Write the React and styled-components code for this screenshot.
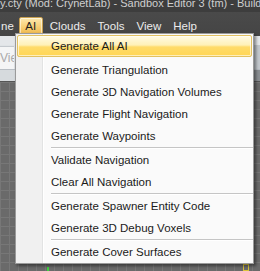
import React from "react";
import styled, { createGlobalStyle } from "styled-components";

const GlobalStyle = createGlobalStyle`
  html, body {
    margin: 0;
    padding: 0;
    background: #6b6b6b;
  }
  body {
    font-family: "Liberation Sans", Arial, sans-serif;
  }
`;

const menuItems = [
  { label: "Generate All AI", active: true },
  { label: "Generate Triangulation" },
  { label: "Generate 3D Navigation Volumes" },
  { label: "Generate Flight Navigation" },
  { label: "Generate Waypoints", separator: true },
  { label: "Validate Navigation" },
  { label: "Clear All Navigation", separator: true },
  { label: "Generate Spawner Entity Code" },
  { label: "Generate 3D Debug Voxels", separator: true },
  { label: "Generate Cover Surfaces" },
];

const topMenu = ["Clouds", "Tools", "View", "Help"];

function App() {
  return (
    <>
      <GlobalStyle />
      <Window>
        <TitleBar>
          <TitleText>y.cty (Mod: CrynetLab) - Sandbox Editor 3 (tm) - Build 5767</TitleText>
        </TitleBar>

        <MenuBar>
          <TopItem $cut>ne</TopItem>
          <TopItem $open>AI</TopItem>
          {topMenu.map((m) => (
            <TopItem key={m}>{m}</TopItem>
          ))}
        </MenuBar>

        <Workspace>
          <ToolStrip>
            <ViewTab>Vie</ViewTab>
          </ToolStrip>
          <SubStrip />
          <Grid>
            <Marker $color="#3fd13f" $left={47} />
            <Marker $color="#d9c23a" $left={243} $box />
          </Grid>
        </Workspace>

        <Dropdown>
          {menuItems.map((item) => (
            <React.Fragment key={item.label}>
              <Item $active={item.active}>{item.label}</Item>
              {item.separator && <Separator />}
            </React.Fragment>
          ))}
        </Dropdown>
      </Window>
    </>
  );
}

export default App;

const Window = styled.div`
  position: relative;
  width: 260px;
  height: 271px;
  overflow: hidden;
  display: flex;
  flex-direction: column;
  background: #6b6b6b;
`;

const TitleBar = styled.div`
  height: 12px;
  flex-shrink: 0;
  overflow: hidden;
  background: #3d3d3d;
  color: #cfcfcf;
  font-size: 11px;
  white-space: nowrap;
`;

const TitleText = styled.span`
  display: block;
  margin-top: -4px;
  line-height: 14px;
`;

const MenuBar = styled.div`
  height: 24px;
  flex-shrink: 0;
  display: flex;
  align-items: center;
  background: linear-gradient(#4a4a4a, #454545);
`;

const TopItem = styled.div`
  height: 18px;
  margin-top: 3px;
  box-sizing: border-box;
  display: flex;
  align-items: center;
  padding: 0 5px;
  font-size: 11.5px;
  color: #ececec;
  border: 1px solid transparent;
  border-radius: 2px;

  ${(p) =>
    p.$cut &&
    `
    padding: 0 4px 0 0;
  `}

  ${(p) =>
    p.$open &&
    `
    width: 24px;
    padding: 0;
    margin-right: 1px;
    justify-content: center;
    color: #1e1e1e;
    border-color: #c8a050;
    background: linear-gradient(#fde9b0, #f8d27a 50%, #f0b94e);
    box-shadow: inset 0 0 0 1px rgba(255, 255, 255, 0.55);
  `}
`;

const Workspace = styled.div`
  flex: 1;
  display: flex;
  flex-direction: column;
`;

const ToolStrip = styled.div`
  height: 34px;
  flex-shrink: 0;
  box-sizing: border-box;
  border-top: 9px solid #e4e7ea;
  border-bottom: 1px solid #b8bec4;
  display: flex;
  background: linear-gradient(90deg, #dfe3e6 0 246px, #c3c8cd 246px);
`;

const ViewTab = styled.div`
  width: 14px;
  height: 22px;
  margin-top: 1px;
  background: #f4f5f6;
  border-top: 1px solid #c4c9ce;
  color: #a9a9a9;
  font-size: 12px;
  line-height: 22px;
  overflow: hidden;
  white-space: nowrap;
`;

const SubStrip = styled.div`
  height: 11px;
  flex-shrink: 0;
  background: linear-gradient(90deg, #d6dadd 0 246px, #8b8f93 246px);
  border-bottom: 1px solid #555;
`;

const Grid = styled.div`
  position: relative;
  flex: 1;
  background-color: #6a6a6a;
  background-image:
    linear-gradient(90deg, #777 1px, transparent 1px),
    linear-gradient(#777 1px, transparent 1px);
  background-size: 9px 9px;
`;

const Marker = styled.div`
  position: absolute;
  bottom: 0;
  left: ${(p) => p.$left}px;
  width: ${(p) => (p.$box ? 6 : 2)}px;
  height: ${(p) => (p.$box ? 7 : 4)}px;
  box-sizing: border-box;
  ${(p) => (p.$box ? `border: 1px solid ${p.$color};` : `background: ${p.$color};`)}
`;

const Dropdown = styled.div`
  position: absolute;
  left: 15px;
  top: 33px;
  width: 239px;
  height: 231px;
  box-sizing: border-box;
  padding-top: 1px;
  border: 1px solid #9a9a9a;
  background: linear-gradient(90deg, #f0f0f0 0 26px, #e2e3e3 26px 27px, #ffffff 27px 28px, #fafafa 28px);
  box-shadow: 2px 2px 3px rgba(0, 0, 0, 0.45);
  display: flex;
  flex-direction: column;
`;

const Item = styled.div`
  height: 22px;
  flex-shrink: 0;
  box-sizing: border-box;
  margin: 0 1px;
  padding-left: 33px;
  display: flex;
  align-items: center;
  font-size: 11.5px;
  color: #1b1b1b;
  border: 1px solid transparent;
  border-radius: 2px;

  ${(p) =>
    p.$active &&
    `
    margin-bottom: 2px;
    border-color: #e2c160;
    background: linear-gradient(#fffbe6, #fff1b8 45%, #ffdb6a 55%, #ffd655);
    box-shadow: inset 0 0 0 1px rgba(255, 255, 255, 0.6);
  `}
`;

const Separator = styled.div`
  height: 2px;
  flex-shrink: 0;
  margin-left: 35px;
  border-top: 1px solid #c5c5c5;
  box-sizing: border-box;
  background: #ffffff;
`;
